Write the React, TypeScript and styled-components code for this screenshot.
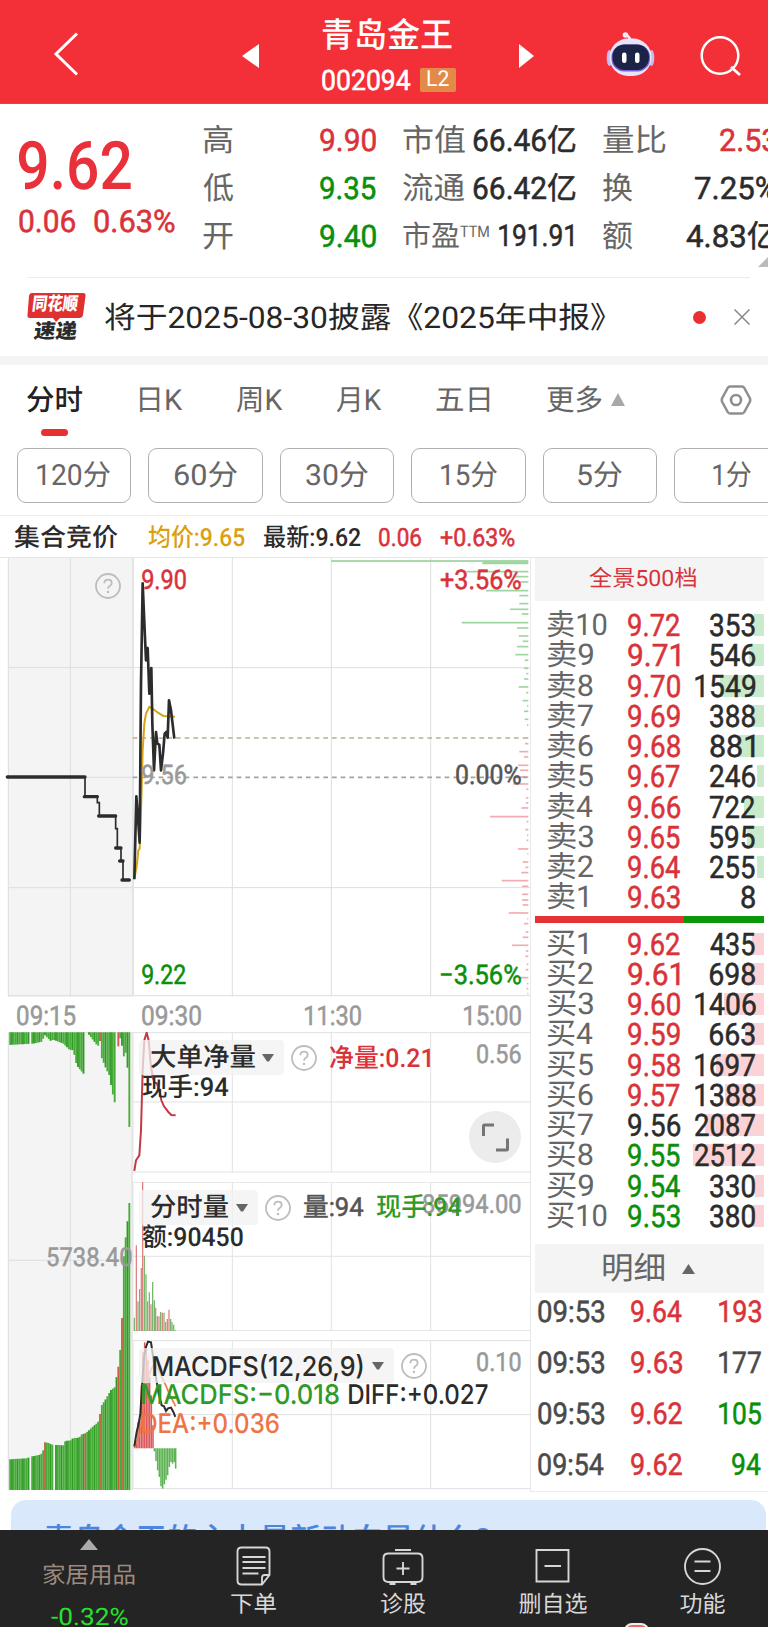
import React, { useLayoutEffect, useRef, useState } from "react";
import styled, { createGlobalStyle } from "styled-components";

const RED = "#d9333a";
const GREEN = "#0a8f0a";
const INK = "#2b2b2b";
const GRAY = "#666";
const MUTED = "#999";

const Global = createGlobalStyle`
  * { box-sizing: border-box; }
  html, body { margin: 0; background: #fff; }
  body { font-family: Roboto, "Noto Sans CJK SC", sans-serif; overflow: hidden; text-rendering: geometricPrecision; }
  svg { display: block; flex: none; }
`;

/* Text condensed or widened so that its ink fills a given width.
   Weight 450 is a regular face thickened with a thin stroke. */
const FitBox = styled.span<{ $w: number; $size: number; $color?: string; $weight?: number; $ml?: number; $font?: string; $lh?: number }>`
  display: inline-block;
  flex: none;
  width: ${(p) => p.$w}px;
  margin-left: ${(p) => p.$ml ?? 0}px;
  height: ${(p) => p.$lh ?? p.$size * 1.2}px;
  line-height: ${(p) => p.$lh ?? p.$size * 1.2}px;
  font-size: ${(p) => p.$size}px;
  font-weight: ${(p) => (p.$weight === 450 ? 400 : p.$weight ?? 400)};
  ${(p) => (p.$weight === 450 ? "-webkit-text-stroke: 0.55px currentColor;" : "")}
  color: ${(p) => p.$color ?? INK};
  white-space: nowrap;
  ${(p) => (p.$font ? `font-family: ${p.$font}, "Noto Sans CJK SC", sans-serif;` : "")}
`;
const FitInner = styled.span`
  display: inline-block;
  transform-origin: 0 50%;
`;

type FitProps = { w: number; size: number; color?: string; weight?: number; ml?: number; font?: string; lh?: number; children: string };

function Fit({ w, size, color, weight, ml, font, lh, children }: FitProps) {
  const ref = useRef<HTMLSpanElement>(null);
  const [transform, setTransform] = useState("none");
  useLayoutEffect(() => {
    const ctx = document.createElement("canvas").getContext("2d");
    if (!ref.current || !ctx) return;
    const cs = getComputedStyle(ref.current);
    ctx.font = `${cs.fontWeight} ${cs.fontSize} ${cs.fontFamily}`;
    ctx.textRendering = "geometricPrecision";
    const m = ctx.measureText(children);
    const ink = m.actualBoundingBoxLeft + m.actualBoundingBoxRight;
    if (ink > 0) setTransform(`scaleX(${w / ink}) translateX(${m.actualBoundingBoxLeft}px)`);
  }, [w, children]);
  return (
    <FitBox $w={w} $size={size} $color={color} $weight={weight} $ml={ml} $font={font} $lh={lh}>
      <FitInner ref={ref} style={{ transform }}>{children}</FitInner>
    </FitBox>
  );
}

const Page = styled.div`
  width: 768px;
  height: 1627px;
  overflow: hidden;
  display: flex;
  flex-direction: column;
  background: #fff;
`;

/* ---------- header ---------- */
const Header = styled.header`
  flex: none;
  height: 104px;
  background: #f33038;
  border-bottom: 1px solid #d9474d;
  display: flex;
  align-items: center;
  padding-left: 52px;
`;
const TitleBlock = styled.div`
  width: 136px;
  margin: 0 60px 0 62px;
  padding-top: 16px;
  height: 104px;
`;
const CodeRow = styled.div`
  display: flex;
  align-items: center;
  margin-top: 9px;
`;
const Level = styled.span`
  margin-left: 9px;
  width: 36px;
  height: 24px;
  border-radius: 2px;
  background: #e38a48;
  display: flex;
  align-items: center;
  justify-content: center;
`;
const CodeText = styled.span`display: flex; padding-top: 2px;`;

const BackIcon = () => (
  <svg width="28" height="50" viewBox="0 0 28 50"><path d="M25 6.500L4 27L25 47.500" fill="none" stroke="#fff" strokeWidth="3" /></svg>
);
const Robot = styled.svg`margin: 0 0 0 70px;`;
const SearchSvg = styled.svg`margin-left: 43px;`;
const PrevSvg = styled.svg`margin-left: 162px;`;

const TopBar = () => (
  <Header>
    <BackIcon />
    <PrevSvg width="18" height="104" viewBox="0 0 18 104"><path d="M17 44V68L0 56Z" fill="#fff" /></PrevSvg>
    <TitleBlock>
      <Fit w={130} size={34} weight={500} color="#fff">青岛金王</Fit>
      <CodeRow>
        <CodeText><Fit w={89} size={28} color="#fff" lh={28} weight={450}>002094</Fit></CodeText>
        <Level><Fit w={22} size={22} color="#fff">L2</Fit></Level>
      </CodeRow>
    </TitleBlock>
    <svg width="17" height="104" viewBox="0 0 17 104"><path d="M1 44V68L16 56Z" fill="#fff" /></svg>
    <Robot width="50" height="104" viewBox="604 0 50 104">
      <path d="M629.500 41Q629 36.500 625 35.500" stroke="#f1effc" strokeWidth="2.500" fill="none" />
      <circle cx="624.500" cy="35" r="2.800" fill="#fbe9f2" />
      <ellipse cx="608.500" cy="58" rx="2.800" ry="8" fill="#c4bff0" />
      <ellipse cx="650.500" cy="58" rx="2.800" ry="8" fill="#c4bff0" />
      <rect x="608.500" y="38.500" width="42" height="37.500" rx="18.500" fill="#e8e5f8" />
      <rect x="610.500" y="44.500" width="38.500" height="27" rx="12.500" fill="#7b5fd6" />
      <rect x="611.500" y="44.500" width="36.500" height="25.500" rx="12" fill="#1b2447" />
      <rect x="621" y="52.500" width="4.500" height="10.500" rx="2.200" fill="#fff" />
      <rect x="634" y="52.500" width="4.500" height="10.500" rx="2.200" fill="#fff" />
    </Robot>
    <SearchSvg width="44" height="104" viewBox="698 0 44 104">
      <circle cx="720" cy="55.500" r="18.300" fill="none" stroke="#fff" strokeWidth="2.500" />
      <path d="M731 67L740 75" stroke="#fff" strokeWidth="2.800" />
    </SearchSvg>
  </Header>
);

/* ---------- quote ---------- */
const Quote = styled.section`
  flex: none;
  height: 173px;
  display: flex;
  padding: 13px 0 0 19px;
  overflow: hidden;
`;
const Last = styled.div`width: 184px; padding-top: 9px;`;
const ChangeRow = styled.div`display: flex; margin-top: -1px;`;
const StatCol = styled.div<{ $w: number; $ml?: number }>`
  flex: none;
  width: ${(p) => p.$w}px;
  margin-left: ${(p) => p.$ml ?? 0}px;
`;
const StatRow = styled.div`
  display: flex;
  justify-content: space-between;
  align-items: center;
  height: 48px;
`;
const Super = styled.span`margin: -10px auto 0 1px; display: flex;`;
const Tail = styled.span`display: flex; padding-right: 3px;`;
const Corner = styled.svg`align-self: flex-end; margin: 0 0 10px -27px;`;

const QuoteBoard = () => (
  <Quote>
    <Last>
      <Fit w={112} size={67} weight={500} color="#e8313a" lh={82}>9.62</Fit>
      <ChangeRow>
        <Fit w={56} size={31} weight={450} color={RED} lh={30}>0.06</Fit>
        <Fit w={81} size={31} weight={450} color={RED} lh={30} ml={19}>0.63%</Fit>
      </ChangeRow>
    </Last>
    <StatCol $w={173}>
      <StatRow><Fit w={30} size={31} color={GRAY}>高</Fit><Fit w={56} size={31} weight={450} color={RED}>9.90</Fit></StatRow>
      <StatRow><Fit w={30} size={31} color={GRAY}>低</Fit><Fit w={56} size={31} weight={450} color={GREEN}>9.35</Fit></StatRow>
      <StatRow><Fit w={30} size={31} color={GRAY}>开</Fit><Fit w={56} size={31} weight={450} color={GREEN}>9.40</Fit></StatRow>
    </StatCol>
    <StatCol $w={173} $ml={27}>
      <StatRow><Fit w={62} size={31} color={GRAY}>市值</Fit><Fit w={102} size={31} weight={450}>66.46亿</Fit></StatRow>
      <StatRow><Fit w={62} size={31} color={GRAY}>流通</Fit><Fit w={102} size={31} weight={450}>66.42亿</Fit></StatRow>
      <StatRow>
        <Fit w={56} size={29} color={GRAY}>市盈</Fit>
        <Super><Fit w={29} size={16} color={GRAY}>TTM</Fit></Super>
        <Tail><Fit w={74} size={30} weight={450}>191.91</Fit></Tail>
      </StatRow>
    </StatCol>
    <StatCol $w={174} $ml={27}>
      <StatRow><Fit w={63} size={31} color={GRAY}>量比</Fit><Fit w={57} size={31} weight={450} color={RED}>2.53</Fit></StatRow>
      <StatRow><Fit w={30} size={31} color={GRAY}>换</Fit><Fit w={82} size={31} weight={450}>7.25%</Fit></StatRow>
      <StatRow><Fit w={30} size={31} color={GRAY}>额</Fit><Fit w={91} size={31} weight={450}>4.83亿</Fit></StatRow>
    </StatCol>
    <Corner width="18" height="10" viewBox="0 0 18 10"><path d="M18 0V10H8Z" fill="#bbb" /></Corner>
  </Quote>
);

/* ---------- notice ---------- */
const Notice = styled.section`
  flex: none;
  height: 79px;
  margin: 0 18px 0 27px;
  border-top: 1px solid #ececec;
  display: flex;
  align-items: center;
`;
const Brand = styled.div`width: 60px; height: 50px; margin-right: 18px; position: relative;`;
const BrandArt = styled.svg`position: absolute; left: 0; top: 0;`;
const BrandText = styled.div<{ $mt: number; $ml: number }>`
  position: relative;
  margin: ${(p) => p.$mt}px 0 0 ${(p) => p.$ml}px;
  height: 22px;
  transform: skewX(-7deg);
`;
const NoticeText = styled.div`display: flex; padding-top: 3px;`;
const Dot = styled.i`width: 13px; height: 13px; border-radius: 50%; background: #e8302f; margin-left: 87px;`;
const CloseSvg = styled.svg`margin-left: auto;`;

const NoticeBar = () => (
  <Notice>
    <Brand>
      <BrandArt width="60" height="32" viewBox="0 0 60 32"><path d="M5 1H56Q59 1 58.500 4L56 23Q55.500 26 52 26H33L29 30L26 26H3Q0 26 .5 23L2 4Q2.500 1 5 1Z" fill="#e0302f" /></BrandArt>
      <BrandText $mt={2} $ml={6}><Fit w={45} size={18} weight={900} color="#fff" lh={22}>同花顺</Fit></BrandText>
      <BrandText $mt={4} $ml={7}><Fit w={43} size={20} weight={900} lh={22}>速递</Fit></BrandText>
    </Brand>
    <NoticeText><Fit w={501} size={30} lh={40} color="#262626">将于2025-08-30披露《2025年中报》</Fit></NoticeText>
    <Dot />
    <CloseSvg width="16" height="16" viewBox="0 0 16 16"><path d="M.5.500L15.500 15.500M15.500.500L.5 15.500" stroke="#888" strokeWidth="1.500" /></CloseSvg>
  </Notice>
);
const Band = styled.div`flex: none; height: 9px; background: #f4f4f4;`;

/* ---------- tabs ---------- */
const Tabs = styled.nav`
  flex: none;
  height: 83px;
  display: flex;
  align-items: flex-start;
  padding: 18px 0 0 27px;
`;
const Tab = styled.div<{ $ml?: number }>`
  margin-left: ${(p) => p.$ml ?? 0}px;
  height: 56px;
  display: flex;
  flex-direction: column;
  align-items: center;
`;
const Underline = styled.i`width: 27px; height: 7px; border-radius: 4px; background: #e8302f; margin-top: 10px; margin-right: 2px;`;
const UpSvg = styled.svg`margin: 10px 0 0 9px;`;
const GearSvg = styled.svg`margin: 1px 0 0 95px;`;

const TabBar = () => (
  <Tabs>
    <Tab><Fit w={56} size={29} weight={500} lh={36} color="#222">分时</Fit><Underline /></Tab>
    <Tab $ml={57}><Fit w={43} size={29} lh={36} color={GRAY}>日K</Fit></Tab>
    <Tab $ml={53}><Fit w={47} size={29} lh={36} color={GRAY}>周K</Fit></Tab>
    <Tab $ml={53}><Fit w={46} size={29} lh={36} color={GRAY}>月K</Fit></Tab>
    <Tab $ml={54}><Fit w={54} size={29} lh={36} color={GRAY}>五日</Fit></Tab>
    <Tab $ml={57}><Fit w={55} size={29} lh={36} color={GRAY}>更多</Fit></Tab>
    <UpSvg width="14" height="13" viewBox="0 0 14 13"><path d="M7 0L14 13H0Z" fill="#a8a8a8" /></UpSvg>
    <GearSvg width="32" height="32" viewBox="0 0 32 32">
      <path d="M10 2.500H22Q23.500 2.500 24.300 4L30 14.500Q30.500 16 30 17.500L24.300 28Q23.500 29.500 22 29.500H10Q8.500 29.500 7.700 28L2 17.500Q1.500 16 2 14.500L7.700 4Q8.500 2.500 10 2.500Z" fill="none" stroke="#8e8e8e" strokeWidth="2.500" />
      <circle cx="16" cy="16" r="5" fill="none" stroke="#8e8e8e" strokeWidth="2.600" />
    </GearSvg>
  </Tabs>
);

const Chips = styled.div`
  flex: none;
  height: 68px;
  display: flex;
  gap: 17px;
  padding-left: 16.500px;
  border-bottom: 1px solid #ececec;
`;
const Chip = styled.div`
  flex: none;
  width: 114.600px;
  height: 55px;
  border: 1px solid #b0b0b0;
  border-radius: 9px;
  display: flex;
  align-items: center;
  justify-content: center;
  padding-top: 1px;
`;
const periods: [string, number][] = [["120分", 73], ["60分", 63], ["30分", 62], ["15分", 56], ["5分", 44], ["1分", 38]];

/* ---------- info line ---------- */
const InfoLine = styled.div`
  flex: none;
  height: 42px;
  padding: 5px 0 0 14px;
  display: flex;
  align-items: center;
  border-bottom: 1px solid #e6e6e6;
`;

/* ---------- main area ---------- */
const Main = styled.main`flex: none; height: 934px; display: flex;`;
const Charts = styled.section`width: 531px; height: 934px; border-right: 1px solid #e9e9e9;`;
const Book = styled.aside`width: 237px; height: 934px; border-bottom: 1px solid #ececec; padding: 0 4px;`;

const Canvas = styled.div<{ $h: number }>`position: relative; height: ${(p) => p.$h}px;`;
const Over = styled.div<{ $x: number; $y: number }>`
  position: absolute;
  left: ${(p) => p.$x}px;
  top: ${(p) => p.$y}px;
  display: flex;
  align-items: center;
`;
const Help = ({ color = "#bdbdbd" }: { color?: string }) => (
  <svg width="26" height="26" viewBox="0 0 26 26">
    <circle cx="13" cy="13" r="12" fill="none" stroke={color} strokeWidth="1.800" />
    <path d="M9.300 10.200Q9.500 6.600 13 6.600Q16.700 6.600 16.700 10Q16.700 11.800 14.700 13Q13 14 13 15.800" fill="none" stroke={color} strokeWidth="1.800" />
    <circle cx="13" cy="19" r="1.200" fill={color} />
  </svg>
);

/* Depth profile: [y, length] in thirds of a pixel. */
const sellDepth = [[38, 138], [64, 185], [79, 40], [95, 30], [121, 127], [136, 27], [160, 27], [177, 55], [191, 20], [217, 200], [233, 34], [257, 29], [273, 17], [289, 34], [313, 39], [330, 11], [354, 13], [370, 6], [386, 13], [410, 29], [427, 7], [451, 17], [467, 4], [483, 13], [507, 11], [524, 4]];
const buyDepth = [[563, 6], [580, 10], [604, 27], [620, 13], [645, 31], [660, 25], [680, 34], [701, 46], [717, 6], [743, 7], [758, 7], [773, 21], [799, 115], [814, 5], [838, 9], [855, 4], [870, 5], [896, 31], [911, 3], [935, 17], [951, 9], [967, 21], [991, 80], [1008, 19], [1032, 19], [1049, 19], [1064, 17], [1088, 59], [1105, 3], [1120, 13], [1145, 8], [1161, 17], [1185, 49], [1202, 7], [1218, 9], [1242, 5], [1258, 8], [1282, 25], [1300, 4], [1315, 5], [1330, 3]];

const PriceChart = () => (
  <Canvas $h={439}>
    <svg width="530" height="439" viewBox="0 557.700 530 439">
      <rect x="8" y="557" width="125" height="440" fill="#f4f4f4" />
      <g transform="translate(0 550) scale(.333333)" fill="none">
        <path d="M25 22V1338M211 22V1338M697 22V1338M994 22V1338M1292 22V1338M25 352H1592M25 681H397M25 1012H1592M25 1336H1592" stroke="#dedede" strokeWidth="3" />
        <path d="M399 22V1338" stroke="#e4e4e4" strokeWidth="6" />
        <path d="M994 32H1585" stroke="#8fca92" strokeWidth="5" />
        {sellDepth.map(([y, l], i) => <path key={y} d={`M${1585 - l} ${y}H1585`} stroke="#9dd6a1" strokeWidth={i ? 5 : 8} />)}
        {buyDepth.map(([y, l]) => <path key={y} d={`M${1585 - l} ${y}H1585`} stroke="#f1acb1" strokeWidth="5" />)}
        <path d="M398 563H1592" stroke="#b9ad96" strokeWidth="5" strokeDasharray="14 12" />
        <path d="M398 681H1592" stroke="#a3a3a3" strokeWidth="5" strokeDasharray="14 12" />
        <path d="M403 985L410 950L415 900L419 895L424 750L428 600L433 520L438 490L448 470L458 475L475 488L490 497L525 499" stroke="#d9a319" strokeWidth="6" />
        <path d="M22 680H255V739H292V757H298V797H347V835H352V893H363V932H369V989H388" stroke="#2c2c2c" strokeWidth="5" />
        <path d="M22 680H255M253 739H292M296 797H347M347 893H363M359 932H369M366 989H388" stroke="#2c2c2c" strokeWidth="10" strokeLinecap="round" />
        <path d="M403 987L409 738L413 790L419 877L423 400L428 99L434 240L438 330L443 293L448 430L454 353L457 520L462 660L468 545L472 580L478 583L483 660L489 610L494 550L499 545L503 562L507 450L513 480L523 565" stroke="#2c2c2c" strokeWidth="8" strokeLinejoin="round" />
      </g>
    </svg>
    <Over $x={94.500} $y={15}><Help /></Over>
    <Over $x={142} $y={6}><Fit w={44} size={27} weight={450} color={RED}>9.90</Fit></Over>
    <Over $x={142} $y={201}><Fit w={44} size={27} weight={450} color={MUTED}>9.56</Fit></Over>
    <Over $x={142} $y={401}><Fit w={44} size={27} weight={450} color={GREEN}>9.22</Fit></Over>
    <Over $x={441} $y={6}><Fit w={80} size={27} weight={450} color={RED}>+3.56%</Fit></Over>
    <Over $x={456} $y={201}><Fit w={65} size={27} weight={450} color="#555">0.00%</Fit></Over>
    <Over $x={441} $y={401}><Fit w={80} size={27} weight={450} color={GREEN}>−3.56%</Fit></Over>
  </Canvas>
);

const Axis = styled.div`
  height: 35px;
  display: flex;
  align-items: center;
  padding: 3px 0 0 17px;
`;

const Lower = styled.div`display: flex; height: 460px;`;
const Panels = styled.div`width: 398px; display: flex; flex-direction: column; gap: 9px;`;

/* Auction volume: outline of bar ends in thirds of a pixel, sampled per bar. */
const topEdge = [[28, 74], [60, 72], [100, 70], [126, 64], [134, 44], [152, 62], [160, 58], [190, 70], [208, 88], [220, 90], [230, 135], [252, 162]];
const topEdge2 = [[266, 42], [280, 60], [292, 76]];
const topEdge3 = [[308, 120], [318, 145], [328, 165], [336, 212], [345, 250]];
const topEdge4 = [[358, 44], [366, 76], [371, 110], [376, 92], [382, 126], [388, 320]];
const botEdge = [[28, 1317], [80, 1314], [96, 1308], [118, 1304], [128, 1298], [134, 1266], [146, 1268], [154, 1273], [190, 1275], [196, 1262], [214, 1260], [218, 1254], [238, 1252], [244, 1243], [258, 1238], [275, 1222], [294, 1206], [299, 1186], [305, 1155], [318, 1135], [332, 1110], [344, 1101], [349, 1073], [354, 1048], [360, 995], [365, 935], [370, 724], [376, 660], [382, 608], [388, 548]];
const at = (pts: number[][], x: number) => {
  for (let i = 1; i < pts.length; i++) {
    if (x <= pts[i][0]) {
      const [x0, y0] = pts[i - 1];
      const [x1, y1] = pts[i];
      return y0 + ((y1 - y0) * (x - x0)) / (x1 - x0);
    }
  }
  return pts[pts.length - 1][1];
};
const barXs = Array.from({ length: 66 }, (_, i) => 30.500 + i * 5.500);
const topBars = barXs.map((x) => {
  if (Math.abs(x - 300) < 3) return { x, y: 62, c: "#d2555a" };
  if (Math.abs(x - 354.500) < 3) return { x, y: 78, c: "#d2555a" };
  const e = x < 254 ? topEdge : x < 264 ? null : x < 295 ? topEdge2 : x < 304 ? null : x < 347 ? topEdge3 : x < 352 ? null : topEdge4;
  return e ? { x, y: at(e, x), c: "" } : null;
});
const redAt = [134, 254, 299, 354, 365];
const shade = (i: number) => (i % 3 === 1 ? "#2f9a26" : "#48ac38");

const AuctionVolume = () => (
  <Canvas $h={460}>
    <svg width="133" height="459" viewBox="0 1031.700 133 459">
      <rect x="8" y="1031" width="125" height="459" fill="#f4f4f4" />
      <g transform="translate(0 1020) scale(.333333)" fill="none">
        <path d="M25 36V1409M211 36V1409M25 720H397M25 36H397" stroke="#dedede" strokeWidth="3" />
        <path d="M397 36V1409" stroke="#e6e6e6" strokeWidth="6" />
        {topBars.map((b, i) => b && i !== 11 && <path key={i} d={`M${b.x} 36V${b.y}`} stroke={b.c || shade(i)} strokeWidth="5.600" />)}
        {barXs.map((x, i) => (i === 11 || i === 24 ? null : (
          <path key={i} d={`M${x} ${at(botEdge, x)}V1409`} stroke={redAt.some((r) => Math.abs(r - x) <= 2.750) ? "#c4603f" : shade(i)} strokeWidth="5.600" />
        )))}
      </g>
    </svg>
    <Over $x={47} $y={211}><Fit w={85} size={26} weight={450} color={MUTED}>5738.40</Fit></Over>
  </Canvas>
);

const Picker = styled.div<{ $w: number }>`
  position: absolute;
  left: 6px;
  top: 8px;
  width: ${(p) => p.$w}px;
  height: 35px;
  border-radius: 4px;
  background: rgba(241, 241, 241, 0.75);
  display: flex;
  align-items: center;
  justify-content: space-between;
  padding: 3px 10px 0 12px;
`;
const Caret = () => <svg width="12" height="11" viewBox="0 0 12 11"><path d="M0 0H12L7 7.500H5Z" fill="#666" /></svg>;
const Expand = styled.div`
  position: absolute;
  left: 336px;
  top: 79px;
  width: 52px;
  height: 52px;
  border-radius: 50%;
  background: #ececec;
`;

const volumeBars: [number, number, string][] = [[403, 892, "g"], [409, 675, "r"], [414, 843, "g"], [419, 806, "g"], [424, 743, "r"], [428, 485, "r"], [433, 706, "g"], [438, 762, "g"], [443, 843, "r"], [448, 816, "g"], [453, 852, "r"], [458, 785, "g"], [463, 840, "g"], [467, 862, "r"], [472, 888, "g"], [477, 888, "r"], [482, 875, "g"], [487, 877, "r"], [492, 877, "g"], [497, 905, "r"], [502, 896, "r"], [507, 868, "r"], [512, 896, "g"], [516, 906, "g"], [521, 913, "g"], [526, 930, "g"]];
const macdUp: [number, number][] = [[404, 1280], [409, 1262], [414, 1205], [419, 1195], [424, 1095], [429, 995], [434, 966], [439, 982], [444, 1020], [449, 1070], [454, 1125], [459, 1215]];
const macdDown: [number, number][] = [[463, 1293], [468, 1322], [473, 1350], [478, 1370], [483, 1398], [488, 1405], [493, 1392], [498, 1378], [503, 1365], [508, 1340], [513, 1325], [518, 1330], [523, 1325], [527, 1345]];

const PanelGrid = ({ top, mid, bottom }: { top: number; mid: number; bottom: number }) => (
  <path d={`M399 ${top}V${bottom}M697 ${top}V${bottom}M994 ${top}V${bottom}M1292 ${top}V${bottom}M397 ${top}H1592M397 ${mid}H1592M397 ${bottom}H1592`} stroke="#e2e2e2" strokeWidth="3" />
);

const NetPanel = () => (
  <Canvas $h={141}>
    <svg width="398" height="141" viewBox="133 1031.700 398 141">
      <g transform="translate(0 1020) scale(.333333)" fill="none">
        <PanelGrid top={37} mid={245} bottom={455} />
        <path d="M403 452L408 420L418 405L423 330L428 150L433 60L440 37L446 60L452 130L458 170L464 188L470 188L478 210L484 240L492 258L505 275L514 284L527 285" stroke="#c23a45" strokeWidth="6" />
      </g>
    </svg>
    <Picker $w={145}><Fit w={104} size={26} weight={500}>大单净量</Fit><Caret /></Picker>
    <Over $x={158} $y={13}><Help /></Over>
    <Over $x={197} $y={12}><Fit w={100} size={26} weight={500} color={RED}>净量:0.21</Fit></Over>
    <Over $x={344} $y={8}><Fit w={44} size={26} weight={450} color={MUTED}>0.56</Fit></Over>
    <Over $x={9} $y={41}><Fit w={87} size={26} weight={500}>现手:94</Fit></Over>
    <Expand><svg width="52" height="52" viewBox="0 0 52 52"><path d="M14.500 25V15Q14.500 14 15.500 14H25M27 39H37.500Q38.500 39 38.500 38V27.500" fill="none" stroke="#757575" strokeWidth="3" /></svg></Expand>
  </Canvas>
);

const VolumePanel = () => (
  <Canvas $h={149}>
    <svg width="398" height="149" viewBox="133 1181.700 398 149">
      <g transform="translate(0 1020) scale(.333333)" fill="none">
        <PanelGrid top={486} mid={708} bottom={931} />
        {volumeBars.map(([x, y, c]) => <path key={x} d={`M${x} ${y}V932`} stroke={c === "r" ? "#df7d80" : "#74b567"} strokeWidth="3.800" />)}
      </g>
    </svg>
    <Picker $w={119}><Fit w={77} size={26} weight={500}>分时量</Fit><Caret /></Picker>
    <Over $x={131.500} $y={13}><Help /></Over>
    <Over $x={171} $y={11}><Fit w={60} size={26} weight={450} color="#555">量:94</Fit></Over>
    <Over $x={290} $y={8}><Fit w={98} size={26} weight={450} color={MUTED}>85994.00</Fit></Over>
    <Over $x={243} $y={11}><Fit w={86} size={26} weight={500} color="#2f9a26">现手:94</Fit></Over>
    <Over $x={9} $y={41}><Fit w={101} size={26} weight={500}>额:90450</Fit></Over>
  </Canvas>
);

const MacdPanel = () => (
  <Canvas $h={151}>
    <svg width="398" height="151" viewBox="133 1339.700 398 151">
      <g transform="translate(0 1020) scale(.333333)" fill="none">
        <PanelGrid top={961} mid={1183} bottom={1405} />
        {macdUp.map(([x, y]) => <path key={x} d={`M${x} ${y}V1284`} stroke="#dc5a5e" strokeWidth="4.600" />)}
        {macdDown.map(([x, y]) => <path key={x} d={`M${x} 1284V${y}`} stroke="#5db354" strokeWidth="4.600" />)}
        <path d="M403 1280L420 1240L428 1180L440 1090L452 1050L463 1030L478 1055L495 1090L510 1125L527 1158" stroke="#ef7a4a" strokeWidth="5" />
        <path d="M403 1278L410 1235L416 1210L421 1180L426 1100L432 1010L438 980L444 964L453 966L458 1000L466 1060L476 1120L485 1155L492 1158L498 1172L504 1164L513 1162L520 1175L526 1190" stroke="#2c2c2c" strokeWidth="6" />
      </g>
    </svg>
    <Picker $w={255}><Fit w={210} ml={2} size={27} weight={500} font="Inter">MACDFS(12,26,9)</Fit><Caret /></Picker>
    <Over $x={267.500} $y={13}><Help /></Over>
    <Over $x={344} $y={8}><Fit w={44} size={26} weight={450} color={MUTED}>0.10</Fit></Over>
    <Over $x={9} $y={39}>
      <Fit w={197} size={27} font="Inter" weight={500} color="#2f9a26">MACDFS:−0.018</Fit>
      <Fit w={139} size={27} font="Inter" weight={500} ml={10}>DIFF:+0.027</Fit>
    </Over>
    <Over $x={9} $y={68}><Fit w={137} size={27} font="Inter" weight={500} color="#ee7444">DEA:+0.036</Fit></Over>
  </Canvas>
);

/* ---------- order book ---------- */
const Depth = styled.div`
  height: 43px;
  background: #f4f4f4;
  display: flex;
  align-items: center;
  justify-content: center;
  padding-right: 14px;
`;
const Levels = styled.div`padding-top: 10px;`;
const Row = styled.div`
  position: relative;
  height: 30.250px;
  display: flex;
  align-items: center;
  padding: 0 9px 0 12px;
`;
const Bar = styled.i<{ $w: number; $buy?: boolean }>`
  position: absolute;
  right: 0;
  top: 3px;
  height: 22px;
  width: ${(p) => p.$w}px;
  background: ${(p) => (p.$buy ? "#fbd3d6" : "#c9ebcb")};
`;
const Side = styled.span`width: 81px; display: flex;`;
const Qty = styled.span`margin-left: auto; display: flex; position: relative;`;
const Ratio = styled.div`
  height: 7px;
  margin: 2px 0 7px;
  background: linear-gradient(90deg, #e53235 0 65%, #0a970a 65%);
`;
const sells: [string, number][] = [["9.72", 353], ["9.71", 546], ["9.70", 1549], ["9.69", 388], ["9.68", 881], ["9.67", 246], ["9.66", 722], ["9.65", 595], ["9.64", 255], ["9.63", 8]];
const buys: [string, number, string?][] = [["9.62", 435], ["9.61", 698], ["9.60", 1406], ["9.59", 663], ["9.58", 1697], ["9.57", 1388], ["9.56", 2087, INK], ["9.55", 2512, GREEN], ["9.54", 330, GREEN], ["9.53", 380, GREEN]];
const qtyWidth = (q: number) => String(q).length * 15.500 - 1.500;

const Level10 = ({ side, n, price, qty, color = RED }: { side: string; n: number; price: string; qty: number; color?: string }) => (
  <Row>
    <Bar $w={qty < 50 ? 0 : (qty / 2512) * 71} $buy={side === "买"} />
    <Side><Fit w={n === 10 ? 60 : n === 1 ? 40 : 46} size={30} lh={30} color={GRAY}>{`${side}${n}`}</Fit></Side>
    <Fit w={52} size={31} lh={30} weight={450} color={color}>{price}</Fit>
    <Qty><Fit w={qtyWidth(qty)} size={31} lh={30} weight={450}>{String(qty)}</Fit></Qty>
  </Row>
);

const DetailHead = styled.div`
  height: 49px;
  margin-top: 12px;
  background: #f4f4f4;
  display: flex;
  align-items: center;
  padding-left: 68px;
`;
const DetailCaret = styled.svg`margin-left: 18px;`;
const Tick = styled.div`
  height: 51.200px;
  display: flex;
  align-items: center;
  padding: 0 3px 0 3px;
`;
const Ticks = styled.div`margin-top: -6px;`;
const ticks: [string, string, string, string, number][] = [
  ["09:53", "9.64", "193", RED, 42], ["09:53", "9.63", "177", "#4a4a4a", 42], ["09:53", "9.62", "105", GREEN, 42], ["09:54", "9.62", "94", GREEN, 29],
];

/* ---------- promo and bottom bar ---------- */
const Promo = styled.div`
  flex: none;
  height: 30px;
  margin: 8px 2px 0 11px;
  border-radius: 15px 15px 0 0;
  background: #dae8fb;
  padding: 20px 0 0 33px;
  overflow: hidden;
`;
const Nav = styled.nav`
  flex: none;
  height: 98px;
  background: #242424;
  border-bottom: 1px solid #777;
  display: flex;
  position: relative;
  padding-left: 14px;
`;
const NavItem = styled.div<{ $w: number }>`
  flex: none;
  width: ${(p) => p.$w}px;
  display: flex;
  flex-direction: column;
  align-items: center;
  padding-top: 13px;
`;
const NavLabel = styled.div`margin-top: 3px; height: 30px;`;
const Sector = styled(NavItem)`padding-top: 9px; margin-right: 15px;`;
const SectorName = styled.div`margin-top: 11px; height: 30px;`;
const SectorChange = styled.div`margin-top: 12px;`;
const Peek = styled.i`
  position: absolute;
  left: 624px;
  bottom: -20px;
  width: 25px;
  height: 24px;
  border-radius: 8px;
  border: 2px solid #eee;
  background: #ea6a62;
`;
const navItems: { label: string; w: number; art: React.ReactNode }[] = [
  { label: "下单", w: 45, art: <path d="M7 4.500H31Q35 4.500 35 8.500V32L27.500 41.500H7Q3 41.500 3 37.500V8.500Q3 4.500 7 4.500ZM8 14H31M8 19H31M8 25H31M8 30.500H24M35 32H30Q27.500 32 27.500 35V41" /> },
  { label: "诊股", w: 45, art: <path d="M11.500 7H27.500M5 10.500H34Q39 10.500 39 15V34Q39 39 34 39H5Q0 39 0 34V15Q0 10.500 5 10.500ZM6 41H12M27 41H33M19.500 19V32M13 25.500H26" /> },
  { label: "删自选", w: 69, art: <path d="M3 7H35V38.500H3ZM11 23H27.500" /> },
  { label: "功能", w: 46, art: <g><circle cx="19" cy="23.500" r="17.500" /><path d="M11 18.500H27M11 28H27" /></g> },
];

export default function App() {
  return (
    <Page>
      <Global />
      <TopBar />
      <QuoteBoard />
      <NoticeBar />
      <Band />
      <TabBar />
      <Chips>
        {periods.map(([p, w]) => <Chip key={p}><Fit w={w} size={29} lh={36} color={GRAY}>{p}</Fit></Chip>)}
      </Chips>
      <InfoLine>
        <Fit w={104} size={25} weight={500}>集合竞价</Fit>
        <Fit w={97} size={25} weight={500} color="#dba010" ml={30}>均价:9.65</Fit>
        <Fit w={97} size={25} weight={500} ml={19}>最新:9.62</Fit>
        <Fit w={42} size={25} weight={450} color={RED} ml={18}>0.06</Fit>
        <Fit w={75} size={25} weight={450} color={RED} ml={19}>+0.63%</Fit>
      </InfoLine>
      <Main>
        <Charts>
          <PriceChart />
          <Axis>
            <Fit w={59} size={27} weight={450} color={MUTED}>09:15</Fit>
            <Fit w={59} size={27} weight={450} color={MUTED} ml={66}>09:30</Fit>
            <Fit w={56} size={27} weight={450} color={MUTED} ml={104}>11:30</Fit>
            <Fit w={57} size={27} weight={450} color={MUTED} ml={103}>15:00</Fit>
          </Axis>
          <Lower>
            <AuctionVolume />
            <Panels>
              <NetPanel />
              <VolumePanel />
              <MacdPanel />
            </Panels>
          </Lower>
        </Charts>
        <Book>
          <Depth><Fit w={107} size={22.500} color={RED}>全景500档</Fit></Depth>
          <Levels>
            {sells.map(([p, q], i) => <Level10 key={p} side="卖" n={10 - i} price={p} qty={q} />)}
            <Ratio />
            {buys.map(([p, q, c], i) => <Level10 key={p} side="买" n={i + 1} price={p} qty={q} color={c} />)}
          </Levels>
          <DetailHead>
            <Fit w={61} size={31} color={GRAY}>明细</Fit>
            <DetailCaret width="13" height="10" viewBox="0 0 13 10"><path d="M6.500 0L13 10H0Z" fill="#666" /></DetailCaret>
          </DetailHead>
          <Ticks>
            {ticks.map(([t, p, q, c, w], i) => (
              <Tick key={i}>
                <Fit w={66} size={30} weight={450} color="#4a4a4a">{t}</Fit>
                <Fit w={51} size={30} weight={450} color={RED} ml={27}>{p}</Fit>
                <Qty><Fit w={w} size={30} weight={450} color={c}>{q}</Fit></Qty>
              </Tick>
            ))}
          </Ticks>
        </Book>
      </Main>
      <Promo><Fit w={446} size={32} weight={500} color="#4a86df" lh={40}>青岛金王的主力最新动向是什么?</Fit></Promo>
      <Nav>
        <Sector $w={150}>
          <svg width="18" height="11" viewBox="0 0 18 11"><path d="M9 0L18 11H0Z" fill="#ababab" /></svg>
          <SectorName><Fit w={92} size={23} lh={30} color="#9d8a7e">家居用品</Fit></SectorName>
          <SectorChange><Fit w={77} size={24} lh={28} color="#25e22d">-0.32%</Fit></SectorChange>
        </Sector>
        {navItems.map((n) => (
          <NavItem key={n.label} $w={149.600}>
            <svg width="40" height="44" viewBox="-.5 0 40 44" fill="none" stroke="#d6d6d6" strokeWidth="1.900" overflow="visible">{n.art}</svg>
            <NavLabel><Fit w={n.w} size={23} lh={30} color="#d8d8d8">{n.label}</Fit></NavLabel>
          </NavItem>
        ))}
        <Peek />
      </Nav>
    </Page>
  );
}
